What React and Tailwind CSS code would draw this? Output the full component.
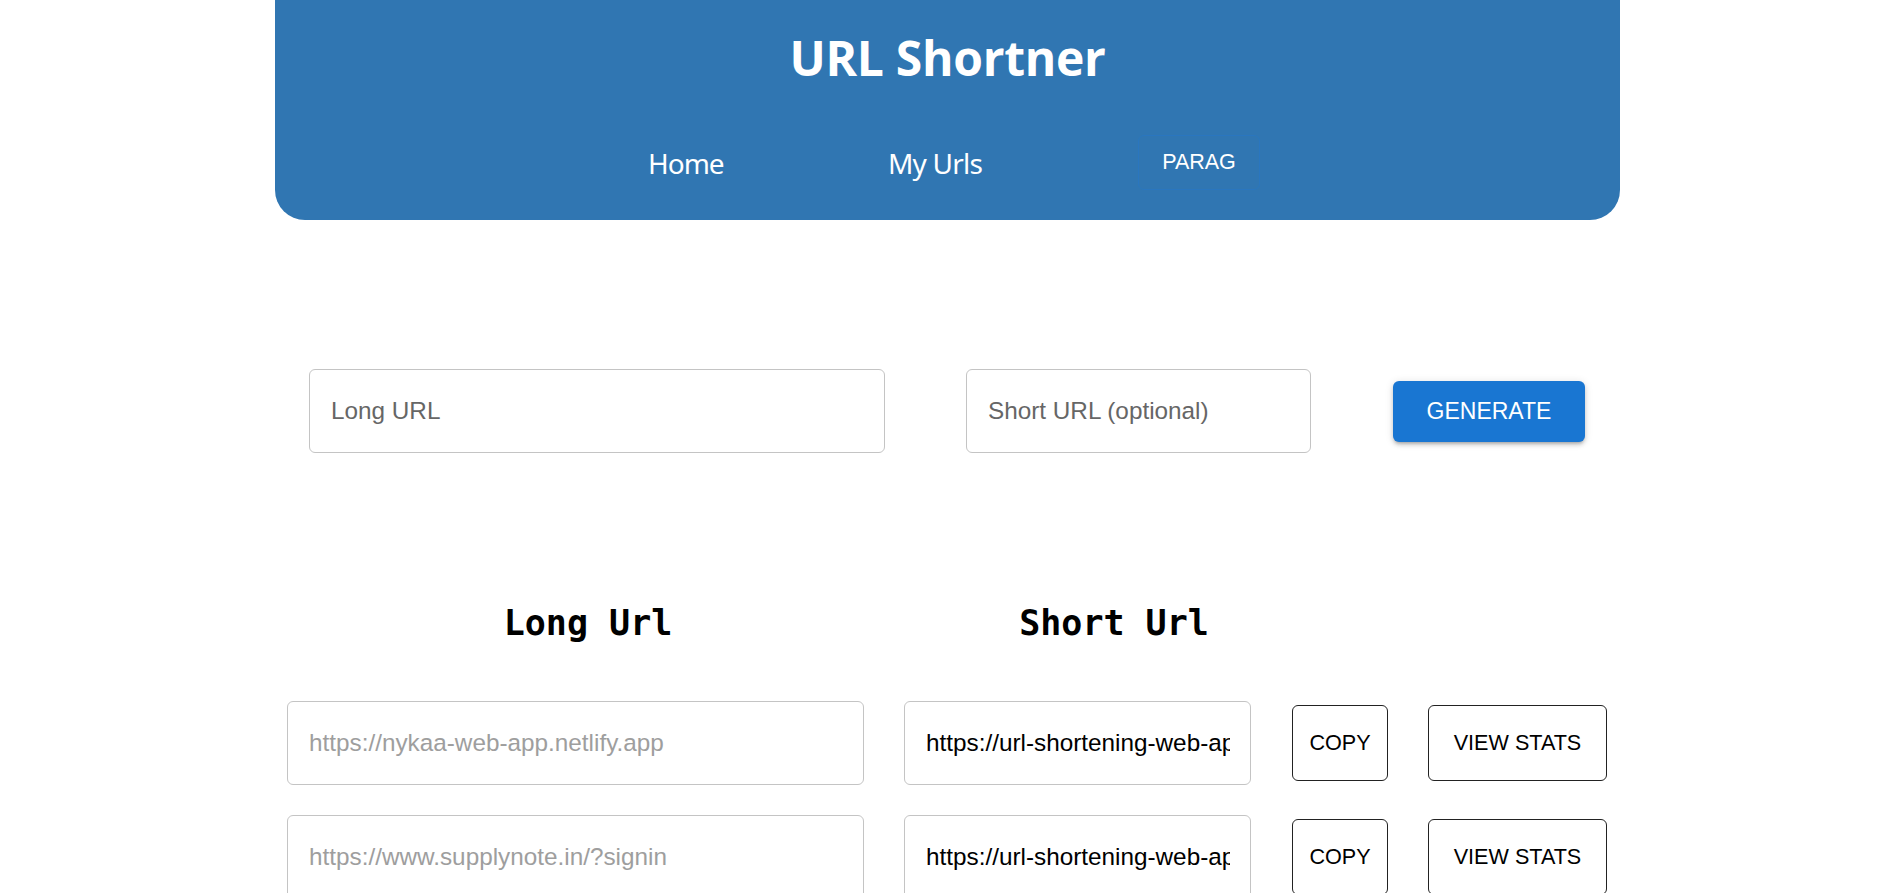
import React, { useState } from 'react';

const rows = [
  { long: 'https://nykaa-web-app.netlify.app', short: 'https://url-shortening-web-app.herokuapp.com/nykaa' },
  { long: 'https://www.supplynote.in/?signin', short: 'https://url-shortening-web-app.herokuapp.com/supply' },
];

const App = () => {
  const [longUrl, setLongUrl] = useState('');
  const [shortUrl, setShortUrl] = useState('');

  return (
    <div className="min-h-screen bg-white font-['Liberation_Sans',Arial,sans-serif]">
      <div className="ml-[275px] w-[1345px]">

        {/* Header */}
        <div className="h-[220px] bg-[#3076b2] rounded-b-[30px] flex flex-col">
          <h1 className="text-center pt-[28px] text-[48px] leading-[60px] font-bold text-white font-['Open_Sans','Noto_Sans',sans-serif] tracking-[-0.3px]">
            URL Shortner
          </h1>
          <nav className="flex items-center mt-[47px]">
            <a className="ml-[373px] w-[72px] text-[28px] leading-[40px] text-white font-['Noto_Sans',sans-serif] tracking-[-1px] whitespace-nowrap">Home</a>
            <a className="ml-[168px] w-[93px] text-[28px] leading-[40px] text-white font-['Noto_Sans',sans-serif] tracking-[-0.8px] whitespace-nowrap">My Urls</a>
            <button className="ml-[157px] w-[122px] h-[55px] border border-[#2a76bf] rounded-[6px] text-[21.5px] text-white uppercase">
              Parag
            </button>
          </nav>
        </div>

        {/* Generate form */}
        <div className="flex items-center mt-[149px] ml-[34px]">
          <input
            value={longUrl}
            onChange={(e) => setLongUrl(e.target.value)}
            placeholder="Long URL"
            className="w-[576px] h-[84px] border border-[#c4c4c4] rounded-[6px] px-[21px] text-[24.3px] text-black placeholder:text-[#666] outline-none"
          />
          <input
            value={shortUrl}
            onChange={(e) => setShortUrl(e.target.value)}
            placeholder="Short URL (optional)"
            className="ml-[81px] w-[345px] h-[84px] border border-[#c4c4c4] rounded-[6px] px-[21px] text-[24.3px] text-black placeholder:text-[#666] outline-none"
          />
          <button className="ml-[82px] w-[192px] h-[61px] bg-[#1976d2] rounded-[6px] text-white text-[23px] uppercase shadow-[0_3px_3px_-2px_rgba(0,0,0,0.2),0_3px_4px_0_rgba(0,0,0,0.14),0_1px_8px_0_rgba(0,0,0,0.12)]">
            Generate
          </button>
        </div>

        {/* Table header */}
        <div className="flex mt-[145px] ml-[12px] h-[50px] items-center font-['DejaVu_Sans_Mono',monospace] font-bold text-[35px] text-black">
          <div className="w-[602px] text-center">Long Url</div>
          <div className="w-[450px] text-center">Short Url</div>
        </div>

        {/* Rows */}
        <div className="flex flex-col gap-[30px] mt-[53px] ml-[12px]">
          {rows.map((row, idx) => (
            <div key={idx} className="flex items-center">
              <input
                disabled
                value={row.long}
                className="w-[577px] h-[84px] border border-[#c4c4c4] rounded-[6px] px-[21px] text-[24.3px] text-[#9e9e9e] bg-white outline-none"
              />
              <input
                readOnly
                value={row.short}
                className="ml-[40px] w-[347px] h-[84px] border border-[#c4c4c4] rounded-[6px] pl-[21px] pr-[20px] text-[24.3px] text-black bg-white outline-none"
              />
              <button className="ml-[41px] w-[96px] h-[76px] border border-[#222] rounded-[6px] text-[21.6px] text-black uppercase">
                Copy
              </button>
              <button className="ml-[40px] w-[179px] h-[76px] border border-[#222] rounded-[6px] text-[21.6px] text-black uppercase">
                View Stats
              </button>
            </div>
          ))}
        </div>

      </div>
    </div>
  );
};

export default App;
